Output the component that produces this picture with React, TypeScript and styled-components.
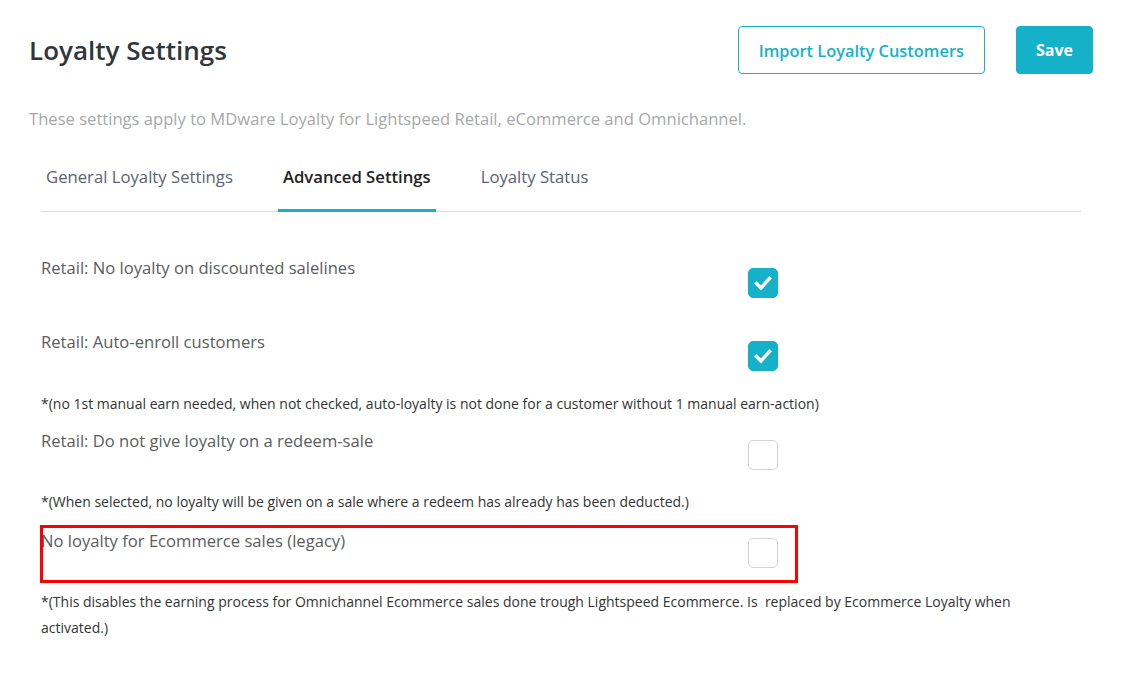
import React, { useState } from "react";
import styled, { createGlobalStyle } from "styled-components";

const Colours = {
  teal: "#15b1c8",
  title: "#30363b",
  label: "#5c5c5c",
  note: "#333333",
  muted: "#a8a8a8",
  tab: "#5b6270",
  line: "#d9d9d9",
  box: "#d2d4d8",
};

const GlobalStyle = createGlobalStyle`
  body {
    margin: 0;
    background: #ffffff;
    font-family: "Open Sans", "Noto Sans", sans-serif;
  }
`;

const Page = styled.div`
  width: 1121px;
  height: 695px;
  box-sizing: border-box;
  padding: 26px 28px 0 29px;
  background: #fff;
`;

const Header = styled.div`
  display: flex;
  align-items: center;
  justify-content: space-between;
  height: 48px;
`;

const Title = styled.h1`
  margin: 0;
  font-size: 26px;
  font-weight: 600;
  color: ${Colours.title};
`;

const Actions = styled.div`
  display: flex;
  gap: 31px;
`;

const Button = styled.button<{ primary?: boolean }>`
  height: 48px;
  box-sizing: border-box;
  padding: 0 ${(p) => (p.primary ? 19 : 20)}px;
  border-radius: 4px;
  border: 1px solid ${Colours.teal};
  background: ${(p) => (p.primary ? Colours.teal : "#fff")};
  color: ${(p) => (p.primary ? "#fff" : Colours.teal)};
  font-family: inherit;
  font-size: ${(p) => (p.primary ? 16 : 16.4)}px;
  font-weight: ${(p) => (p.primary ? 700 : 600)};
  cursor: pointer;
`;

const Subtitle = styled.p`
  margin: 34px 0 0;
  font-size: 16.6px;
  line-height: 22px;
  color: ${Colours.muted};
`;

const Tabs = styled.div`
  display: flex;
  gap: 40px;
  margin: 26px 12px 0;
  border-bottom: 1px solid ${Colours.line};
`;

const Tab = styled.div<{ active?: boolean }>`
  padding: 0 5px;
  height: 56px;
  line-height: 42px;
  box-sizing: border-box;
  font-size: 16.7px;
  font-weight: ${(p) => (p.active ? 600 : 400)};
  color: ${(p) => (p.active ? "#222" : Colours.tab)};
  border-bottom: 3px solid ${(p) => (p.active ? Colours.teal : "transparent")};
  margin-bottom: -1px;
  cursor: pointer;
`;

const Settings = styled.div`
  margin: 0 12px;
  padding-top: 44px;
  width: 1040px;
`;

const Row = styled.div<{ gapTop: number }>`
  position: relative;
  display: grid;
  grid-template-columns: 707px 30px;
  align-items: start;
  margin-top: ${(p) => p.gapTop}px;
`;

const Label = styled.label`
  font-size: 16.6px;
  line-height: 24px;
  color: ${Colours.label};
`;

const Box = styled.span<{ checked: boolean; offset: number }>`
  width: 30px;
  height: 30px;
  margin-top: ${(p) => p.offset}px;
  box-sizing: border-box;
  border-radius: 5px;
  border: 1px solid ${(p) => (p.checked ? Colours.teal : Colours.box)};
  background: ${(p) => (p.checked ? Colours.teal : "#fff")};
  display: flex;
  align-items: center;
  justify-content: center;
  cursor: pointer;
`;

const Note = styled.p<{ gapTop: number; lh: number }>`
  margin: ${(p) => p.gapTop}px 0 0;
  font-size: 14px;
  line-height: ${(p) => p.lh}px;
  color: ${Colours.note};
`;

const Highlight = styled.div`
  position: absolute;
  left: -1px;
  top: -4px;
  width: 758px;
  height: 58px;
  box-sizing: border-box;
  border: 3px solid #ff0000;
  pointer-events: none;
`;

const Check = () => (
  <svg width="20" height="20" viewBox="0 0 20 20">
    <path
      d="M3.5 10.5 L8 15 L16.5 5.5"
      fill="none"
      stroke="#fff"
      strokeWidth="3.4"
      strokeLinecap="square"
    />
  </svg>
);

interface CheckProps {
  checked: boolean;
  offset: number;
  onToggle: () => void;
}

const CheckBox = ({ checked, offset, onToggle }: CheckProps) => (
  <Box checked={checked} offset={offset} onClick={onToggle}>
    {checked && <Check />}
  </Box>
);

export default function App() {
  const [values, setValues] = useState([true, true, false, false]);
  const toggle = (i: number) =>
    setValues((v) => v.map((x, j) => (j === i ? !x : x)));

  return (
    <>
      <GlobalStyle />
      <Page>
        <Header>
          <Title>Loyalty Settings</Title>
          <Actions>
            <Button>Import Loyalty Customers</Button>
            <Button primary>Save</Button>
          </Actions>
        </Header>
        <Subtitle>
          These settings apply to MDware Loyalty for Lightspeed Retail, eCommerce and Omnichannel.
        </Subtitle>
        <Tabs>
          <Tab>General Loyalty Settings</Tab>
          <Tab active>Advanced Settings</Tab>
          <Tab>Loyalty Status</Tab>
        </Tabs>
        <Settings>
          <Row gapTop={0}>
            <Label>Retail: No loyalty on discounted salelines</Label>
            <CheckBox checked={values[0]} offset={12} onToggle={() => toggle(0)} />
          </Row>
          <Row gapTop={32}>
            <Label>Retail: Auto-enroll customers</Label>
            <CheckBox checked={values[1]} offset={11} onToggle={() => toggle(1)} />
          </Row>
          <Note gapTop={23} lh={20}>
            *(no 1st manual earn needed, when not checked, auto-loyalty is not done for a customer without 1 manual earn-action)
          </Note>
          <Row gapTop={15}>
            <Label>Retail: Do not give loyalty on a redeem-sale</Label>
            <CheckBox checked={values[2]} offset={11} onToggle={() => toggle(2)} />
          </Row>
          <Note gapTop={22} lh={20}>
            *(When selected, no loyalty will be given on a sale where a redeem has already has been deducted.)
          </Note>
          <Row gapTop={17}>
            <Label>No loyalty for Ecommerce sales (legacy)</Label>
            <CheckBox checked={values[3]} offset={9} onToggle={() => toggle(3)} />
            <Highlight />
          </Row>
          <Note gapTop={21} lh={26}>
            *(This disables the earning process for Omnichannel Ecommerce sales done trough Lightspeed Ecommerce. Is&nbsp; replaced by Ecommerce Loyalty when activated.)
          </Note>
        </Settings>
      </Page>
    </>
  );
}
